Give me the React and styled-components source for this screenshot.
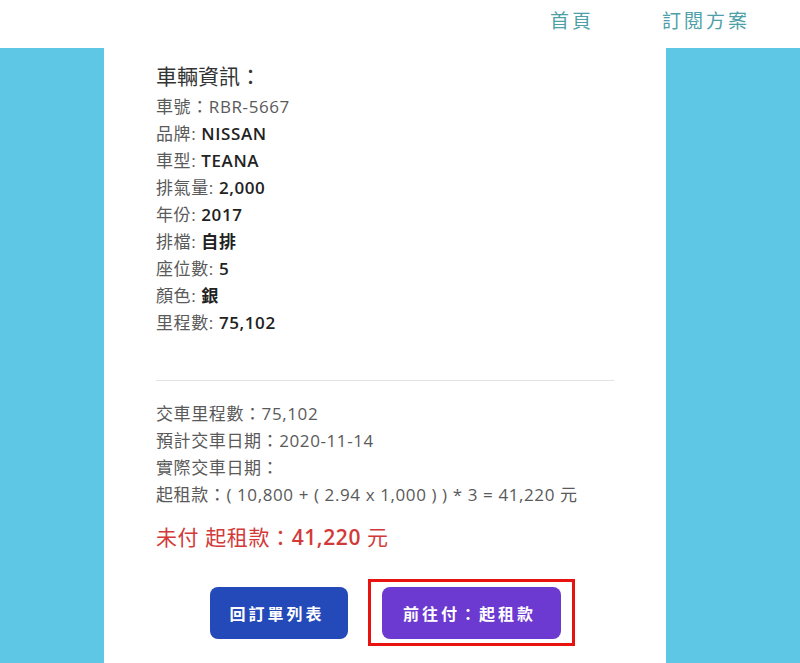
import React from "react";
import styled, { createGlobalStyle } from "styled-components";

const GlobalStyle = createGlobalStyle`
  html, body {
    margin: 0;
    padding: 0;
    background: #fff;
  }
  body {
    font-family: "Open Sans", "Noto Sans CJK TC", sans-serif;
  }
`;

const carInfo = [
  { label: "車號：", value: "RBR-5667", plain: true },
  { label: "品牌: ", value: "NISSAN" },
  { label: "車型: ", value: "TEANA" },
  { label: "排氣量: ", value: "2,000" },
  { label: "年份: ", value: "2017" },
  { label: "排檔: ", value: "自排" },
  { label: "座位數: ", value: "5" },
  { label: "顏色: ", value: "銀" },
  { label: "里程數: ", value: "75,102" },
];

const deliveryInfo = [
  "交車里程數：75,102",
  "預計交車日期：2020-11-14",
  "實際交車日期：",
  "起租款：( 10,800 + ( 2.94 x 1,000 ) ) * 3 = 41,220 元",
];

export default function App() {
  return (
    <>
      <GlobalStyle />
      <Header>
        <NavLink>首頁</NavLink>
        <NavLink>訂閱方案</NavLink>
      </Header>
      <Main>
        <Panel>
          <Title>車輛資訊：</Title>
          <List>
            {carInfo.map((row) => (
              <Row key={row.label}>
                {row.label}
                <Value $plain={row.plain}>{row.value}</Value>
              </Row>
            ))}
          </List>
          <Divider />
          <List>
            {deliveryInfo.map((line) => (
              <Row key={line}>{line}</Row>
            ))}
          </List>
          <Unpaid>
            未付 起租款：<strong>41,220</strong> 元
          </Unpaid>
          <Actions>
            <Button $color="#2449b9">回訂單列表</Button>
            <Highlight>
              <Button $color="#6c3ad1" $wide>
                前往付：起租款
              </Button>
              <Outline />
            </Highlight>
          </Actions>
        </Panel>
      </Main>
    </>
  );
}

const Header = styled.header`
  height: 48px;
  display: flex;
  justify-content: flex-end;
  align-items: center;
  gap: 68px;
  padding-right: 50px;
  box-sizing: border-box;
  background: #fff;
`;

const NavLink = styled.a`
  font-family: "Noto Sans CJK TC", sans-serif;
  font-size: 19px;
  letter-spacing: 3px;
  color: #4e9fa8;
  margin-top: -9px;
`;

const Main = styled.main`
  background: #5ec7e5;
  min-height: 615px;
  display: flex;
`;

const Panel = styled.section`
  width: 562px;
  margin-left: 104px;
  box-sizing: border-box;
  padding: 12px 52px 24px;
  background: #fff;
`;

const Title = styled.h2`
  margin: 0 0 3px;
  font-family: "Noto Sans CJK TC", sans-serif;
  font-size: 21px;
  font-weight: 400;
  line-height: 30px;
  color: #333;
`;

const List = styled.div`
  display: flex;
  flex-direction: column;
`;

const Row = styled.div`
  font-size: 17px;
  line-height: 27px;
  letter-spacing: 0.6px;
  color: #5a5a5a;
  white-space: nowrap;
`;

const Value = styled.span`
  color: ${(p) => (p.$plain ? "#5a5a5a" : "#222")};
  font-weight: ${(p) => (p.$plain ? 400 : 600)};
`;

const Divider = styled.hr`
  margin: 44px 0 19px;
  border: none;
  border-top: 1px solid #e2e2e2;
`;

const Unpaid = styled.div`
  margin-top: 14px;
  font-size: 21px;
  line-height: 30px;
  letter-spacing: 0.6px;
  color: #d23a3a;

  strong {
    font-weight: 600;
  }
`;

const Actions = styled.div`
  display: flex;
  justify-content: center;
  align-items: center;
  gap: 34px;
  margin-top: 35px;
`;

const Highlight = styled.div`
  position: relative;
`;

const Outline = styled.div`
  position: absolute;
  left: -14px;
  right: -14px;
  top: -8px;
  bottom: -7px;
  border: 3px solid #e8120f;
  pointer-events: none;
`;

const Button = styled.button`
  width: ${(p) => (p.$wide ? "179px" : "138px")};
  height: 52px;
  border: none;
  border-radius: 8px;
  background: ${(p) => p.$color};
  color: #fff;
  font-family: "Noto Sans CJK TC", sans-serif;
  font-size: 16px;
  font-weight: 700;
  letter-spacing: 3px;
  padding-left: 3px;
  cursor: pointer;
`;
